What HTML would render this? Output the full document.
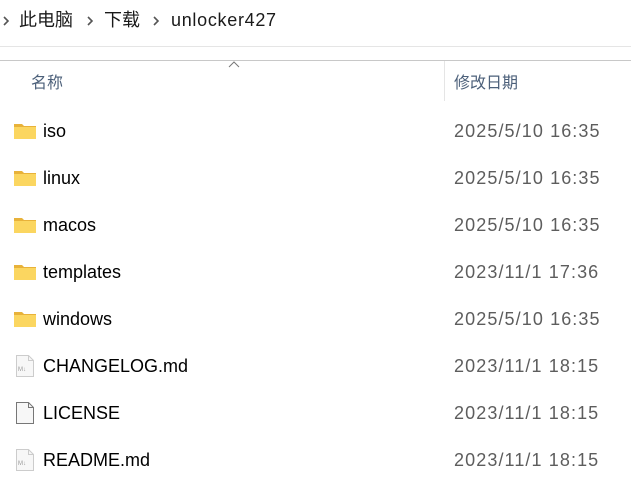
<!DOCTYPE html><html><head><meta charset="utf-8"><style>
body{margin:0;width:631px;height:492px;background:#fff;font-family:"Liberation Sans","Noto Sans CJK SC",sans-serif;position:relative;overflow:hidden}
.a{position:absolute;white-space:nowrap}
.bc{top:8px;font-size:18px;line-height:24px;color:#1a1a1a}
.chev{position:absolute}
.n{left:43px;font-size:18px;line-height:22px;color:#000}
.d{left:454px;font-size:18px;line-height:22px;color:#5d5d5d;letter-spacing:1.1px}
.f{position:absolute;left:14px;width:22px;height:16px}
</style></head><body>
<svg class="chev" style="left:2px;top:15px" width="8" height="12"><path d="M2 2l4 4-4 4" stroke="#555" stroke-width="1.6" fill="none"/></svg>
<div class="a bc" style="left:19px">此电脑</div>
<svg class="chev" style="left:86px;top:15px" width="8" height="12"><path d="M2 2l4 4-4 4" stroke="#555" stroke-width="1.6" fill="none"/></svg>
<div class="a bc" style="left:104px">下载</div>
<svg class="chev" style="left:152px;top:15px" width="8" height="12"><path d="M2 2l4 4-4 4" stroke="#555" stroke-width="1.6" fill="none"/></svg>
<div class="a bc" style="left:171px;letter-spacing:0.7px">unlocker427</div>
<div class="a" style="left:0;top:46px;width:631px;height:1px;background:#e5e5e5"></div>
<div class="a" style="left:0;top:60px;width:631px;height:1px;background:#c8c8c8"></div>
<div class="a" style="left:444px;top:61px;width:1px;height:40px;background:#e5e5e5"></div>
<svg class="a" style="left:228px;top:61px" width="12" height="7"><path d="M1 6L6 1L11 6" stroke="#777" fill="none"/></svg>
<div class="a" style="left:31px;top:73px;font-size:16px;line-height:22px;color:#4c607a">名称</div>
<div class="a" style="left:454px;top:73px;font-size:16px;line-height:22px;color:#4c607a">修改日期</div>
<div id="rows"></div>
<script>
var r=[["iso","2025/5/10 16:35",0],["linux","2025/5/10 16:35",0],["macos","2025/5/10 16:35",0],["templates","2023/11/1 17:36",0],["windows","2025/5/10 16:35",0],["CHANGELOG.md","2023/11/1 18:15",1],["LICENSE","2023/11/1 18:15",2],["README.md","2023/11/1 18:15",1]];
var h="";r.forEach(function(x,i){var y=120+i*47;
var ic=x[2]==0?'<svg class="f" style="top:'+(y+3)+'px" viewBox="0 0 22 16"><path d="M0 1h8l2 2h12v13H0z" fill="#e8b23a"/><path d="M0 4h22v12H0z" fill="#fbd660"/></svg>':
'<svg class="a" style="left:15px;top:'+(y)+'px" width="20" height="22" viewBox="0 0 20 22"><path d="M1.5 .5h12l5 5v16h-17z" fill="#f7f7f7" stroke="'+(x[2]==2?'#777':'#ccc')+'"/><path d="M13.5 .5v5h5" fill="none" stroke="'+(x[2]==2?'#777':'#ccc')+'"/>'+(x[2]==1?'<text x="3" y="16" font-size="6" fill="#999" font-family="Liberation Sans">M↓</text>':'')+'</svg>';
h+=ic+'<div class="a n" style="top:'+y+'px">'+x[0]+'</div><div class="a d" style="top:'+y+'px">'+x[1]+'</div>';});
document.getElementById("rows").innerHTML=h;
</script>
</body></html>
